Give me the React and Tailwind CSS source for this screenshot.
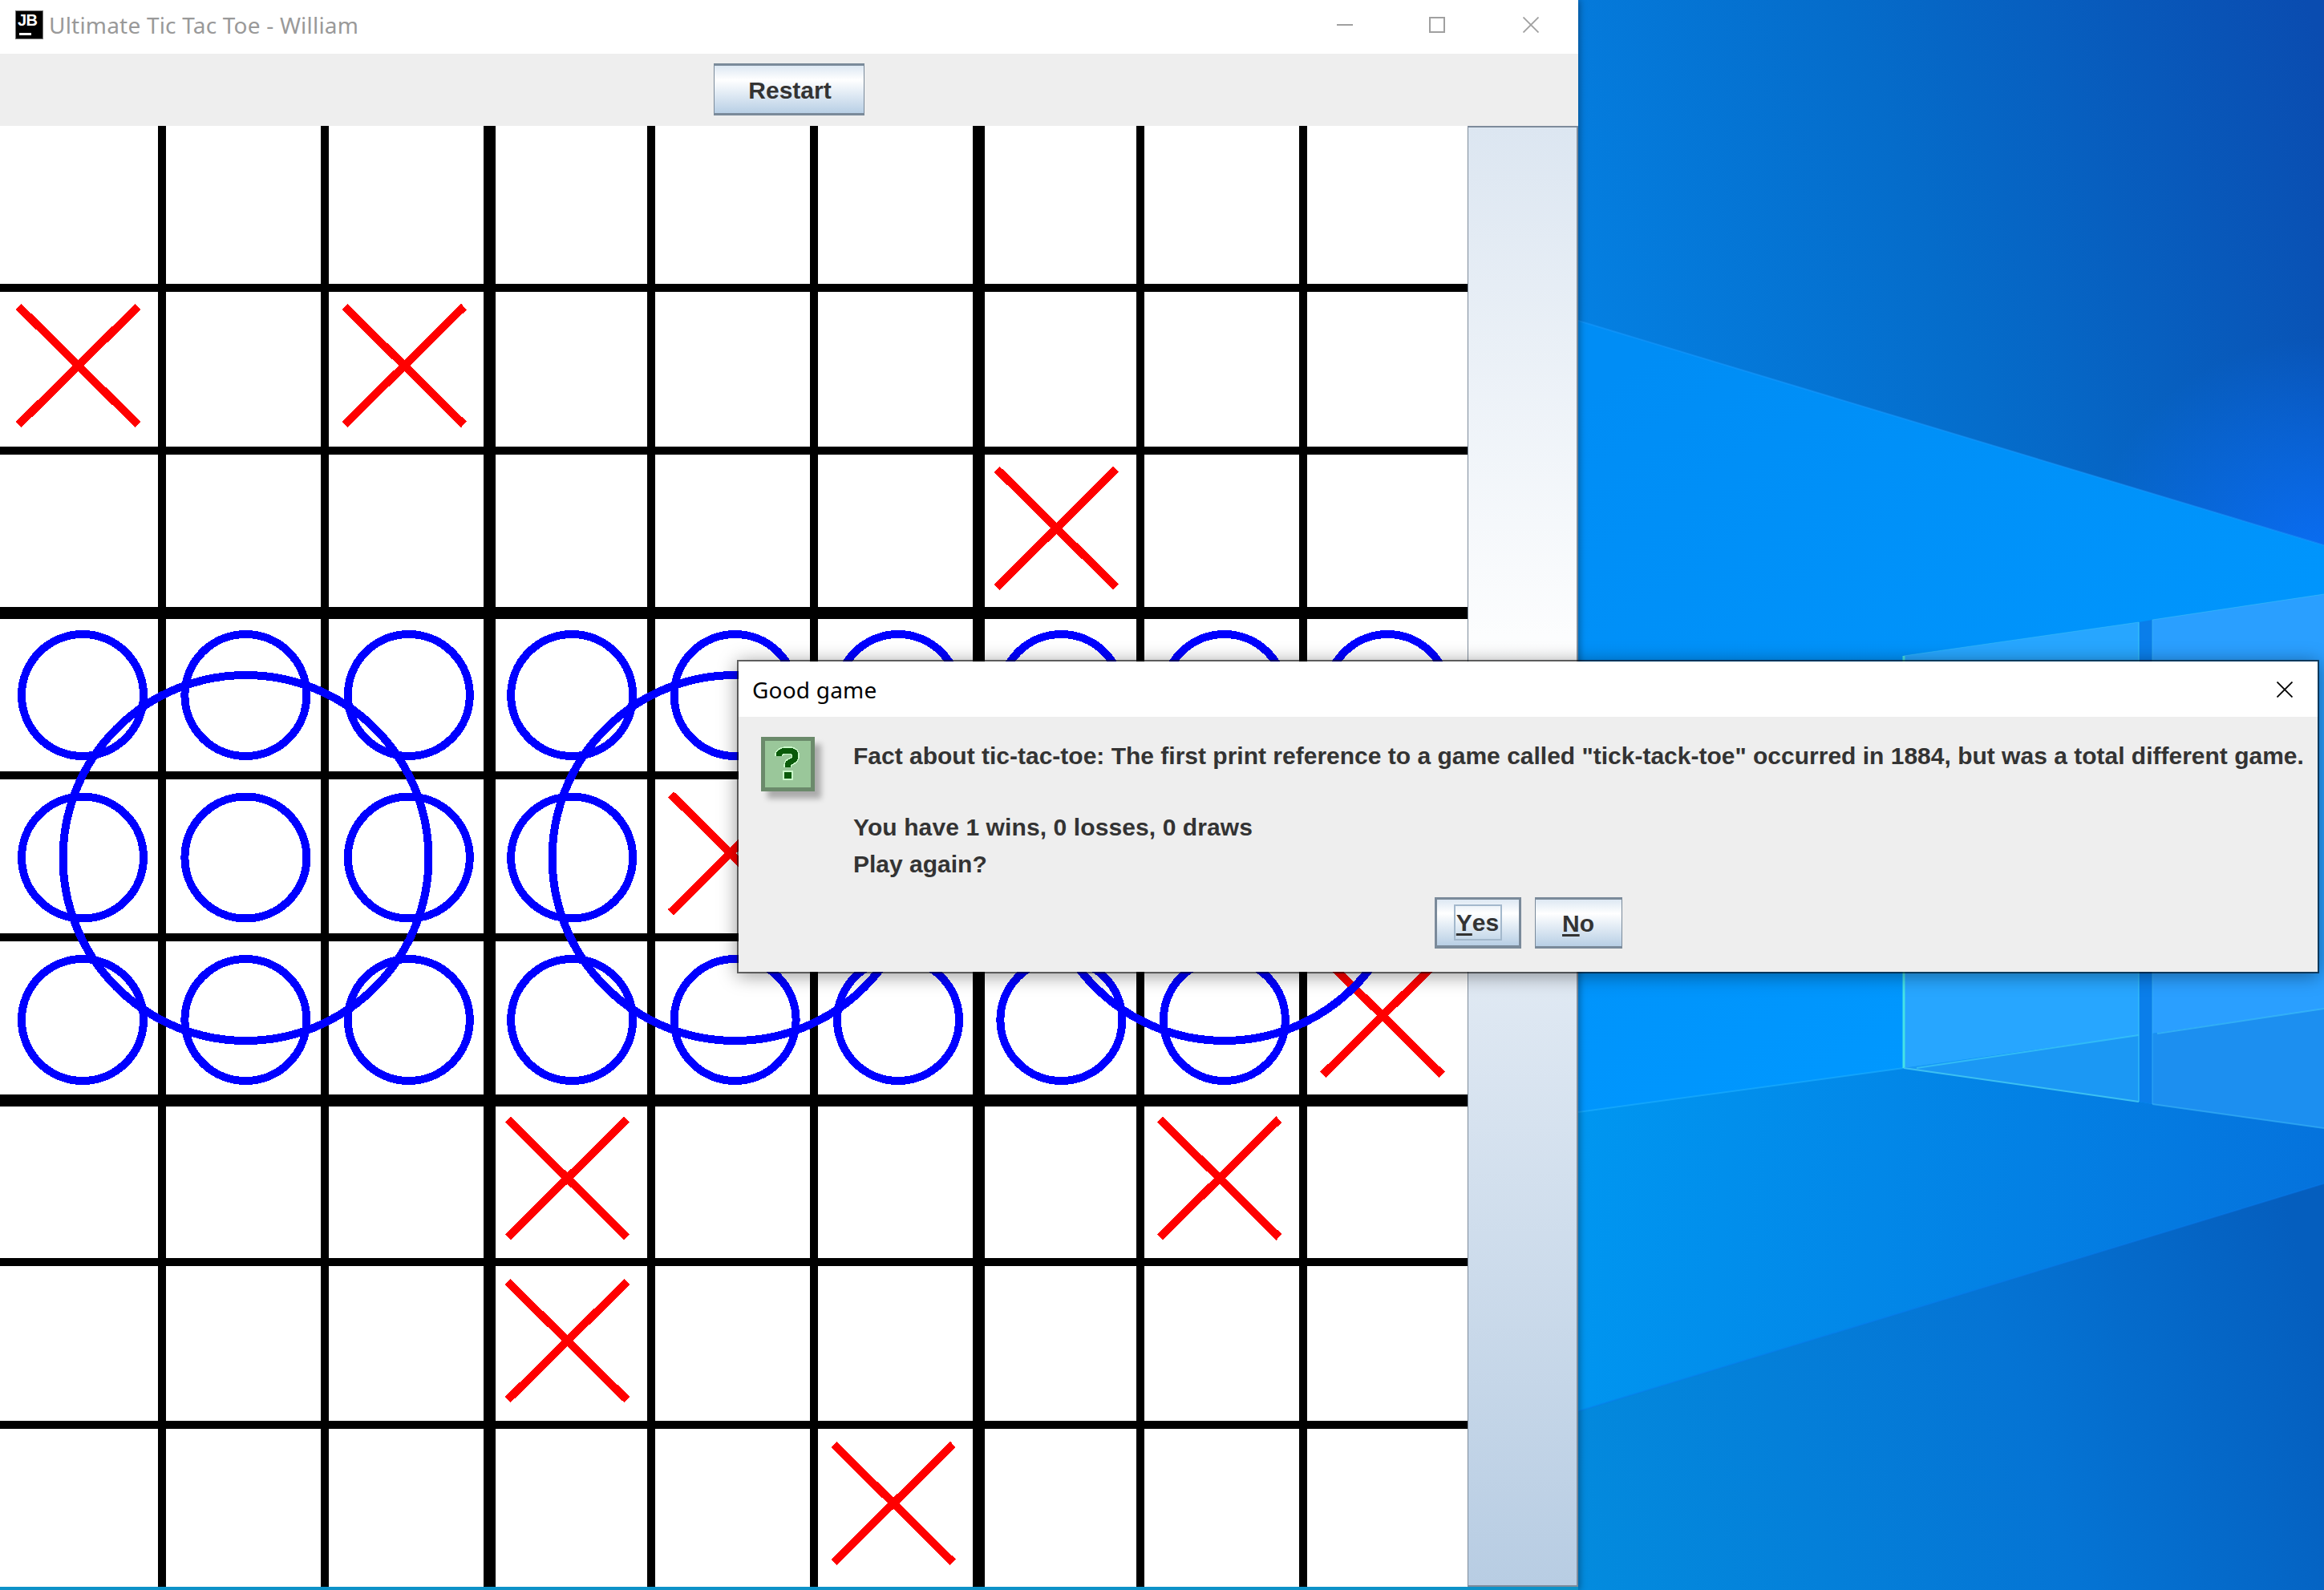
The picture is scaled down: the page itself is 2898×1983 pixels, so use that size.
const VERTICAL = [
  [197, 10], [400, 10], [603, 15], [807, 10], [1010, 10], [1213, 15], [1417, 10], [1620, 10],
];
const HORIZONTAL = [
  [197, 10], [400, 10], [600, 15], [805, 10], [1007, 10], [1208, 15], [1412, 10], [1615, 10],
];

const CROSSES = [
  [0, 1], [2, 1], [6, 2], [4, 4], [8, 5], [3, 6], [7, 6], [3, 7], [5, 8],
];

const CIRCLES = [
  ...[0, 1, 2, 3, 4, 5, 6, 7, 8].map(col => [col, 0]),
  ...[0, 1, 2, 3].map(col => [col, 1]),
  ...[0, 1, 2, 3, 4, 5, 6, 7].map(col => [col, 2]),
];

function Board() {
  return (
    <svg viewBox="0 0 1830 1822" className="block w-[1830px] h-[1822px] bg-white" shapeRendering="crispEdges">
      {VERTICAL.map(([x, w]) => (
        <rect key={x} x={x} y={0} width={w} height={1822} fill="#000" />
      ))}
      {HORIZONTAL.map(([y, h]) => (
        <rect key={y} x={0} y={y} width={1830} height={h} fill="#000" />
      ))}
      {CROSSES.map(([col, row]) => {
        const cx = 97.6 + col * 203.3;
        const cy = 299 + (row - 1) * 202.7;
        return (
          <g key={`${col}-${row}`} stroke="#ff0000" strokeWidth="10">
            <line x1={cx - 74.3} y1={cy - 73.5} x2={cx + 74.3} y2={cy + 73.5} />
            <line x1={cx + 74.3} y1={cy - 73.5} x2={cx - 74.3} y2={cy + 73.5} />
          </g>
        );
      })}
      <g fill="none" stroke="#0000ff" strokeWidth="10">
        {CIRCLES.map(([col, row]) => (
          <circle key={`${col}-${row}`} cx={103 + col * 203.4} cy={710 + row * 202.5} r={76} />
        ))}
        <circle cx={306.5} cy={913} r={228} />
        <circle cx={916.6} cy={913} r={228} />
        <circle cx={1527} cy={913} r={228} />
      </g>
    </svg>
  );
}

function Wallpaper() {
  return (
    <svg viewBox="1968 0 930 1983" className="block w-full h-full">
      <defs>
        <linearGradient id="mid" gradientUnits="userSpaceOnUse" x1="1968" y1="500" x2="2500" y2="1300">
          <stop offset="0" stopColor="#008df5" />
          <stop offset="1" stopColor="#0098ff" />
        </linearGradient>
        <linearGradient id="top" gradientUnits="userSpaceOnUse" x1="1968" y1="400" x2="2898" y2="60">
          <stop offset="0" stopColor="#0480e2" />
          <stop offset="0.45" stopColor="#056cca" />
          <stop offset="1" stopColor="#0a4cb0" />
        </linearGradient>
        <radialGradient id="glow" gradientUnits="userSpaceOnUse" cx="2898" cy="720" r="300">
          <stop offset="0" stopColor="#0a72ff" stopOpacity="0.9" />
          <stop offset="1" stopColor="#0a72ff" stopOpacity="0" />
        </radialGradient>
        <linearGradient id="floor" gradientUnits="userSpaceOnUse" x1="1968" y1="1450" x2="2898" y2="1560">
          <stop offset="0" stopColor="#0096f0" />
          <stop offset="1" stopColor="#0572dc" />
        </linearGradient>
        <linearGradient id="corner" gradientUnits="userSpaceOnUse" x1="1968" y1="1950" x2="2898" y2="1650">
          <stop offset="0" stopColor="#038bde" />
          <stop offset="0.6" stopColor="#0574d4" />
          <stop offset="1" stopColor="#055ebe" />
        </linearGradient>
      </defs>
      <rect x="1968" y="0" width="930" height="1983" fill="url(#mid)" />
      <polygon points="1968,0 2898,0 2898,680 1968,400" fill="url(#top)" />
      <polygon points="1968,0 2898,0 2898,680 1968,400" fill="url(#glow)" />
      <line x1="1968" y1="400" x2="2898" y2="680" stroke="#1a9aff" strokeWidth="2" opacity="0.5" />
      <polygon points="1968,1387 2374,1332 2667,1374 2684,1377 2898,1407 2898,1983 1968,1983" fill="url(#floor)" />
      <polygon points="1968,1760 2898,1476 2898,1983 1968,1983" fill="url(#corner)" />
      <line x1="1968" y1="1760" x2="2898" y2="1476" stroke="#0a7cf0" strokeWidth="2" opacity="0.4" />
      <line x1="1968" y1="1387" x2="2374" y2="1332" stroke="#1fb0ff" strokeWidth="2" opacity="0.6" />
      <polygon points="2667,776 2684,773 2684,1377 2667,1374" fill="#0a7eea" />
      <polygon points="2374,818 2667,776 2667,1291 2374,1332" fill="#27a6ff" />
      <polygon points="2374,1332 2667,1291 2667,1374" fill="#1b98f4" />
      <polygon points="2684,773 2898,741 2898,1258 2684,1289" fill="#2a9fff" />
      <polygon points="2684,1289 2898,1258 2898,1407 2684,1377" fill="#1c8ff0" />
      <line x1="2374" y1="818" x2="2374" y2="1332" stroke="#45e2e6" strokeWidth="3" />
      <line x1="2374" y1="1332" x2="2667" y2="1374" stroke="#3cc0f2" strokeWidth="2" />
      <line x1="2390" y1="1332" x2="2667" y2="1291" stroke="#3ccaf8" strokeWidth="2" opacity="0.7" />
      <line x1="2690" y1="1289" x2="2898" y2="1258" stroke="#3cbcf8" strokeWidth="2" opacity="0.7" />
      <line x1="2684" y1="1377" x2="2898" y2="1407" stroke="#36aef4" strokeWidth="2" opacity="0.7" />
      <line x1="2667" y1="776" x2="2667" y2="1374" stroke="#38c4f6" strokeWidth="2" opacity="0.6" />
      <line x1="2684" y1="773" x2="2684" y2="1377" stroke="#38b4f6" strokeWidth="2" opacity="0.4" />
      <line x1="2374" y1="818" x2="2667" y2="776" stroke="#45c8f8" strokeWidth="1" opacity="0.5" />
      <line x1="2684" y1="773" x2="2898" y2="741" stroke="#45c8f8" strokeWidth="1" opacity="0.5" />
    </svg>
  );
}

function JetBrainsIcon() {
  return (
    <div className="relative w-[35px] h-[36px] bg-black border border-[#777] shrink-0">
      <span className="absolute left-[2px] top-[-1px] text-white font-bold text-[20px] leading-[24px] tracking-[-0.5px] [font-family:'Liberation_Sans',sans-serif]">
        JB
      </span>
      <div className="absolute left-[4px] top-[27px] w-[15px] h-[3px] bg-white" />
    </div>
  );
}

function WindowButtons() {
  return (
    <div className="flex items-center ml-auto pr-[49px]">
      <svg width="20" height="20" viewBox="0 0 20 20" shapeRendering="crispEdges">
        <rect x="0" y="9" width="20" height="2" fill="#a0a0a0" />
      </svg>
      <svg className="ml-[95px]" width="20" height="20" viewBox="0 0 20 20" shapeRendering="crispEdges">
        <rect x="1" y="1" width="18" height="18" fill="none" stroke="#a0a0a0" strokeWidth="2" />
      </svg>
      <svg className="ml-[97px]" width="20" height="20" viewBox="0 0 20 20">
        <path d="M0.5 0.5 L19.5 19.5 M19.5 0.5 L0.5 19.5" stroke="#a0a0a0" strokeWidth="1.8" />
      </svg>
    </div>
  );
}

function HelpIcon() {
  return (
    <div className="w-[67px] h-[68px] shrink-0 bg-[#9ac79a] border-[5px] border-[#6b8a6b] shadow-[8px_9px_7px_rgba(0,0,0,0.28)]">
      <svg viewBox="0 0 57 58" className="block w-[57px] h-[58px]" shapeRendering="crispEdges">
        <g fill="none" strokeLinecap="butt">
          <path d="M17 19 Q17 12 29 12 Q38 12 38 19 Q38 24 30 27 Q28 28 28 33" stroke="#c9f7c9" strokeWidth="10" />
          <path d="M17 19 Q17 12 29 12 Q38 12 38 19 Q38 24 30 27 Q28 28 28 33" stroke="#0a5a0a" strokeWidth="7" />
        </g>
        <rect x="23" y="38" width="11" height="10" fill="#0a5a0a" stroke="#c9f7c9" strokeWidth="2" />
      </svg>
    </div>
  );
}

function DialogButton({ label, rest, focused, width }) {
  return (
    <button
      className={`${width} h-[64px] flex items-center justify-center bg-gradient-to-b from-[#dde8f3] via-[#ffffff] via-30% to-[#b8cfe5] text-[#333] font-bold text-[30px] ${
        focused
          ? 'border-[3px] border-b-[4px] border-[#7a8a9a]'
          : 'border border-t-[3px] border-b-[3px] border-[#7a8a9a]'
      }`}
    >
      <span
        className={`flex items-center justify-center ${
          focused ? 'w-[60px] h-[45px] border-2 border-[#a3b8cc]' : ''
        }`}
      >
        <span className="underline decoration-[3px] underline-offset-[3px] [text-decoration-skip-ink:none]">{label}</span>
        {rest}
      </span>
    </button>
  );
}

function GameOverDialog() {
  return (
    <div className="absolute left-[919px] top-[823px] w-[1973px] h-[391px] flex flex-col border-2 border-black/60 bg-clip-padding bg-[#eeeeee] shadow-[0_3px_22px_rgba(0,0,0,0.4)]">
      <div className="flex items-center h-[69px] shrink-0 bg-white pl-[17px] pr-[31px] text-black text-[28px] [font-family:'Noto_Sans',sans-serif]">
        <span className="tracking-[0.2px]">Good game</span>
        <svg className="ml-auto" width="20" height="20" viewBox="0 0 20 20">
          <path d="M0.5 0.5 L19.5 19.5 M19.5 0.5 L0.5 19.5" stroke="#000" strokeWidth="1.8" />
        </svg>
      </div>
      <div className="flex items-start pl-[28px] pt-[25px] gap-[47px] text-[#333] font-bold text-[30px] leading-[46px] whitespace-nowrap">
        <HelpIcon />
        <div className="flex flex-col pt-[1px] pl-[1px]">
          <p>Fact about tic-tac-toe: The first print reference to a game called "tick-tack-toe" occurred in 1884, but was a total different game.</p>
          <p className="mt-[43px] tracking-[0.1px]">You have 1 wins, 0 losses, 0 draws</p>
          <p>Play again?</p>
        </div>
      </div>
      <div className="flex justify-center gap-[17px] mt-[18px]">
        <DialogButton label="Y" rest="es" focused width="w-[108px]" />
        <DialogButton label="N" rest="o" width="w-[109px]" />
      </div>
    </div>
  );
}

export default function App() {
  return (
    <div className="relative flex w-[2898px] h-[1983px] overflow-hidden [font-family:'Liberation_Sans',Arial,sans-serif]">
      <div className="relative z-10 flex flex-col w-[1968px] shrink-0 shadow-[2px_0_8px_rgba(0,0,0,0.35)]">
        <div className="flex items-center h-[67px] shrink-0 bg-white pl-[19px] pb-[5px]">
          <JetBrainsIcon />
          <span className="ml-[7px] text-[#999999] text-[28px] tracking-[0.2px] [font-family:'Noto_Sans',sans-serif]">
            Ultimate Tic Tac Toe - William
          </span>
          <WindowButtons />
        </div>
        <div className="flex justify-center items-start h-[90px] shrink-0 pt-[12px] bg-[#eeeeee]">
          <button className="w-[188px] h-[65px] pt-[2px] pl-[2px] border border-t-[3px] border-b-[3px] border-[#7a8a9a] bg-gradient-to-b from-[#dde8f3] via-[#ffffff] via-30% to-[#b8cfe5] text-[#333] font-bold text-[30px]">
            Restart
          </button>
        </div>
        <div className="flex h-[1822px] shrink-0">
          <Board />
          <div className="w-[138px] border-l border-r-2 border-t-2 border-b-2 border-[#7d8b9b] bg-[linear-gradient(to_bottom,#dce6f1_0%,#ffffff_38%,#ffffff_42%,#e0e9f3_58%,#b8cde3_100%)]" />
        </div>
        <div className="h-[4px] bg-[#0d92c8]" />
      </div>
      <div className="flex-1 min-w-0">
        <Wallpaper />
      </div>
      <div className="absolute z-20 inset-0 pointer-events-none">
        <GameOverDialog />
      </div>
    </div>
  );
}
